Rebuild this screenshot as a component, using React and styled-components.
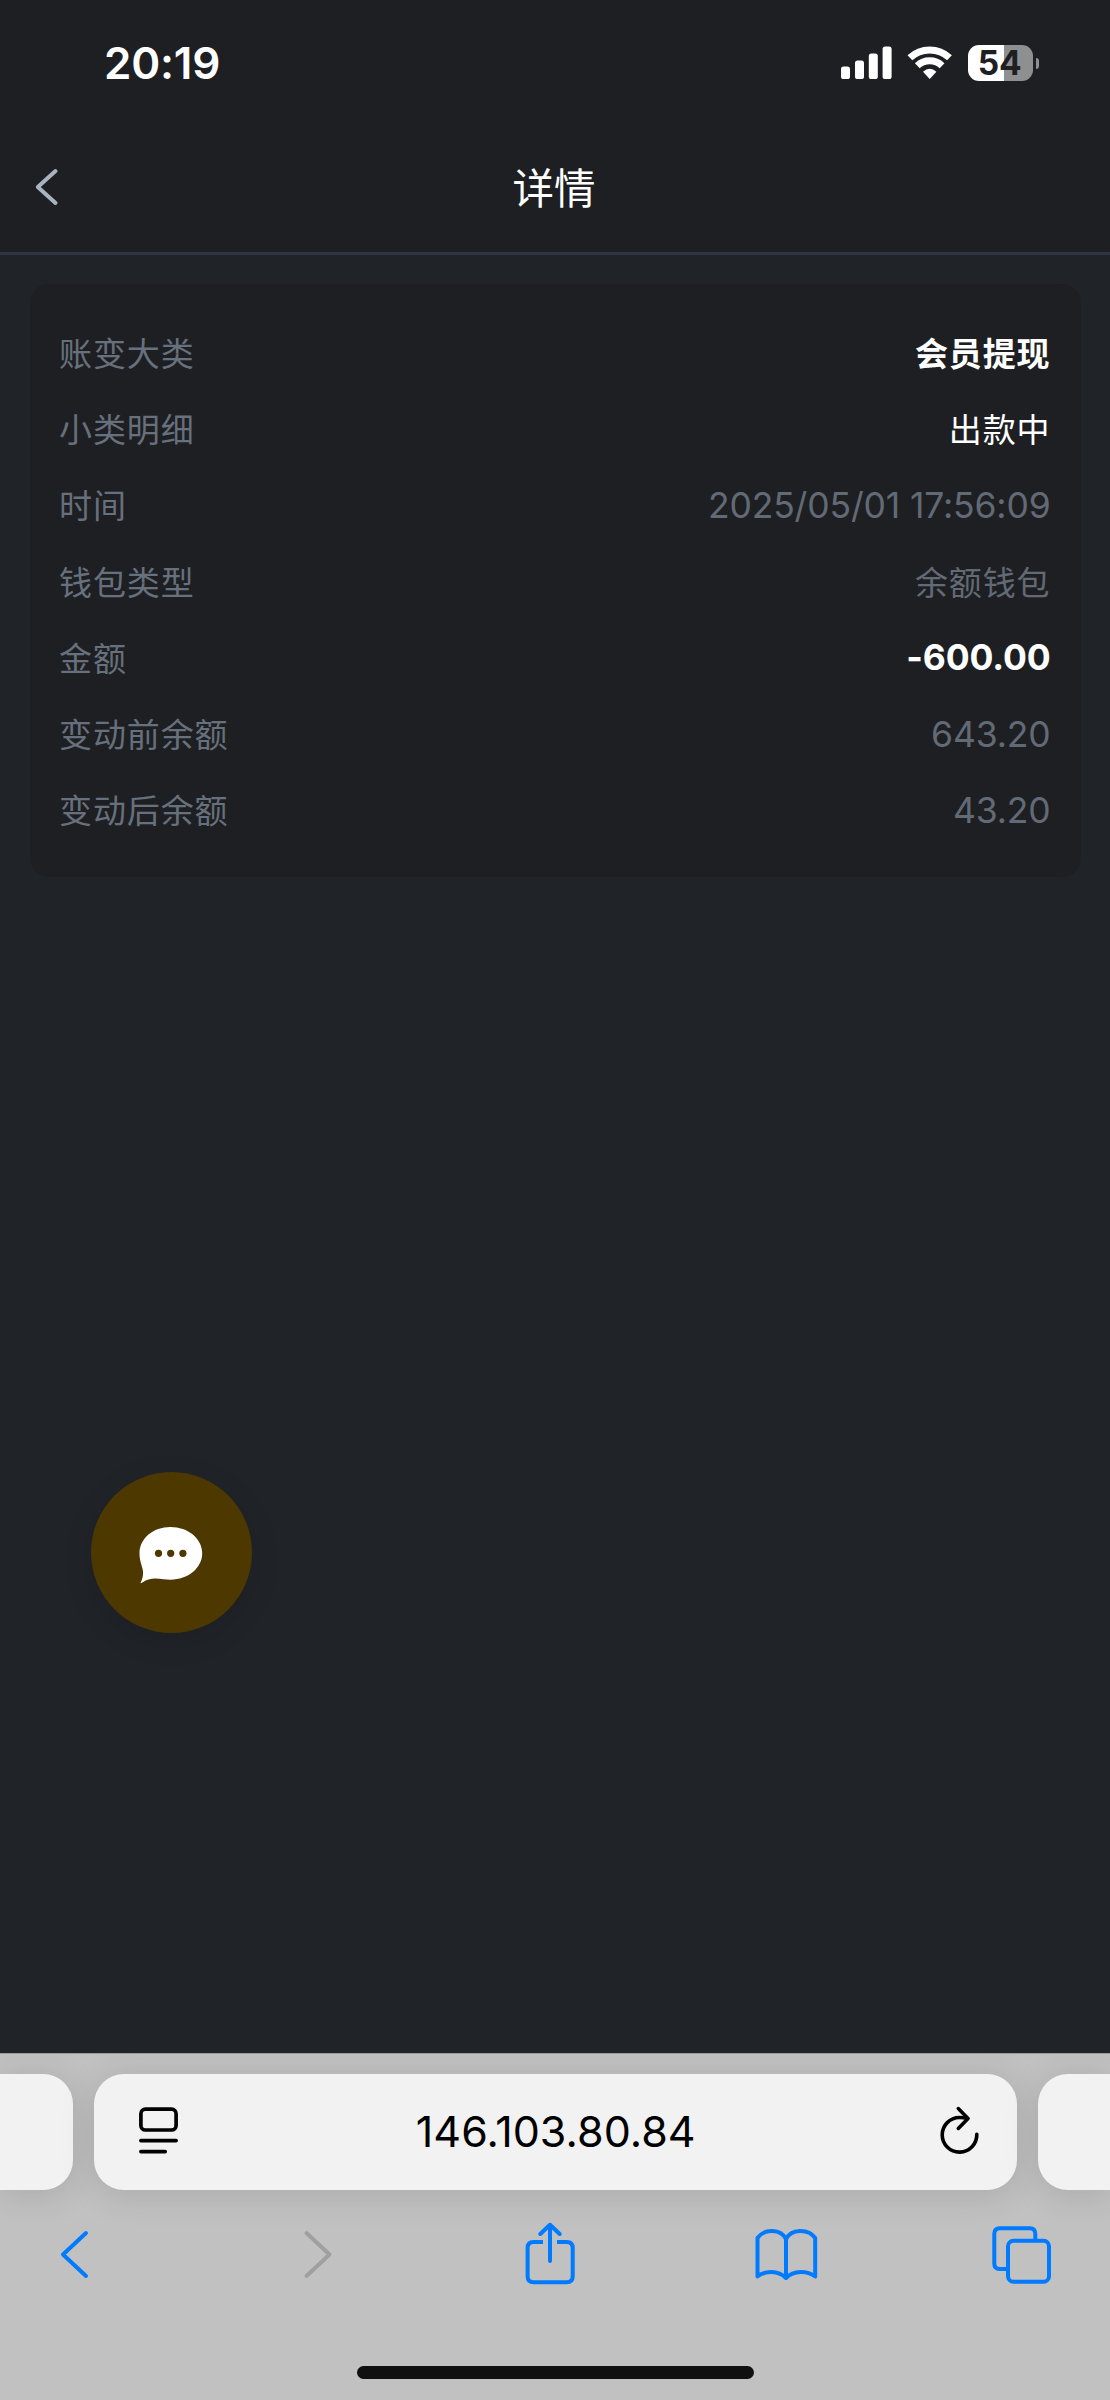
import React from 'react'
import styled, { createGlobalStyle } from 'styled-components';

const rows = [
    { label: '账变大类', value: '会员提现', color: '#ffffff', bold: true },
    { label: '小类明细', value: '出款中', color: '#ffffff' },
    { label: '时间', value: '2025/05/01 17:56:09', num: true },
    { label: '钱包类型', value: '余额钱包' },
    { label: '金额', value: '-600.00', color: '#ffffff', bold: true, num: true },
    { label: '变动前余额', value: '643.20', num: true },
    { label: '变动后余额', value: '43.20', num: true },
]

const StatusIcons = () => (
    <Icons>
        <svg width="50" height="34" viewBox="0 0 50 34" fill="#fff">
            <rect x="0" y="20.5" width="9" height="12.5" rx="2.6" />
            <rect x="14" y="14.5" width="9" height="18.5" rx="2.6" />
            <rect x="27.8" y="7.5" width="9" height="25.5" rx="2.6" />
            <rect x="41.6" y="0.5" width="9" height="32.5" rx="2.6" />
        </svg>
        <svg width="44" height="34" viewBox="0 0 44 34" fill="none" stroke="#fff" strokeWidth="7">
            <path d="M1.9 11.8A29 29 0 0 1 41.5 11.8" />
            <path d="M9.3 19.7A18.2 18.2 0 0 1 34.1 19.7" />
            <path d="M21.7 33L15 25.8Q21.7 19.7 28.4 25.8Z" fill="#fff" stroke="none" />
        </svg>
        <Battery>
            <Level>54</Level>
            <Nub />
        </Battery>
    </Icons>
)

const App = () => {
    return (<>
    <GlobalStyle />
    <Page>
        <StatusBar>
            <Time>20:19</Time>
            <StatusIcons />
        </StatusBar>
        <Header>
            <Back width="24" height="38" viewBox="0 0 24 38">
                <path d="M20.5 3L2.8 19L20.5 35" fill="none" stroke="#a9b3c0" strokeWidth="4" strokeLinecap="round" strokeLinejoin="round" />
            </Back>
            <Title>详情</Title>
        </Header>
        <Content>
            <Card>
                {rows.map((row) => (
                    <Row key={row.label}>
                        <Label>{row.label}</Label>
                        <Value $color={row.color} $bold={row.bold} $num={row.num}>{row.value}</Value>
                    </Row>
                ))}
            </Card>
            <ChatButton>
                <svg width="64" height="58" viewBox="0 0 64 58">
                    <path d="M31.500 0C49 0 63.200 11.500 63.200 26.300S49 52.700 31.500 52.700C27 52.700 22 51.300 15.500 51.400C9.500 51.600 6 53.500 2.400 56.100C1.600 56.500 1.300 56 1.700 55.400C3.500 52 4.300 48.500 4 44.500C3.600 39.500 .5 35 .5 26.300C.5 11.500 14 0 31.500 0Z" fill="#fff" />
                    <circle cx="19.500" cy="26.300" r="3.600" fill="#4d3800" />
                    <circle cx="31.700" cy="26.300" r="3.600" fill="#4d3800" />
                    <circle cx="43.900" cy="26.300" r="3.600" fill="#4d3800" />
                </svg>
            </ChatButton>
        </Content>
        <Browser>
            <Tabs>
                <SideTab $left />
                <AddressBar>
                    <svg width="40" height="48" viewBox="0 0 40 48" fill="none" stroke="#000" strokeWidth="3.7" strokeLinecap="round">
                        <rect x="1.9" y="2.2" width="35.200" height="20.800" rx="4.500" />
                        <path d="M1.900 33.600H37.100M1.900 44.600H26.200" />
                    </svg>
                    <Url>146.103.80.84</Url>
                    <svg width="44" height="52" viewBox="0 0 44 52" fill="none" stroke="#000" strokeWidth="3.6" strokeLinecap="round" strokeLinejoin="round">
                        <path d="M38.800 29.300A17.300 17.300 0 1 1 21.500 12.500C24 12.500 27 12.800 29.500 13.500" />
                        <path d="M20.300 3.600L30 13.400L20.300 23.400" />
                    </svg>
                </AddressBar>
                <SideTab />
            </Tabs>
            <Toolbar>
                <Tool viewBox="0 0 68 72">
                    <path d="M46 15L23 36.500L46 58" />
                </Tool>
                <Tool viewBox="0 0 68 72" $off>
                    <path d="M29.500 15L52.500 36.500L29.500 58" />
                </Tool>
                <Tool viewBox="0 0 68 72">
                    <path d="M29 24H19.600Q13.600 24 13.600 30V58.200Q13.600 64.200 19.600 64.200H52.700Q58.700 64.200 58.700 58.200V30Q58.700 24 52.700 24H43" strokeLinecap="butt" />
                    <path d="M36 43V6.800M26.300 16L36 6.800L45.700 16" />
                </Tool>
                <Tool viewBox="0 0 68 72">
                    <path d="M35 21C30 11 14 10 6.500 20V58.500C14 52.500 27 52 35 60C43 52 56 52.500 64.200 58.500V20C57 10 40 11 35 21V60" />
                </Tool>
                <Tool viewBox="0 0 68 72">
                    <rect x="20" y="22.700" width="41" height="41" rx="5.500" />
                    <path d="M47.300 22V15.800Q47.300 10.300 41.800 10.300H11.800Q6.300 10.300 6.300 15.800V45.500Q6.300 51 11.800 51H20" strokeLinecap="butt" />
                </Tool>
            </Toolbar>
            <HomeIndicator />
        </Browser>
    </Page>
    </>)
}
export default App



const GlobalStyle = createGlobalStyle`
    * {
        box-sizing: border-box;
    }
    body {
        margin: 0;
        background: #202328;
        font-family: Inter, "Noto Sans CJK SC", sans-serif;
    }
    svg {
        display: block;
        flex: none;
        overflow: visible;
    }
`

const Page = styled.div`
    display: flex;
    flex-direction: column;
    width: 1110px;
    height: 2400px;
    overflow: hidden;
    background: #202328;
`

const StatusBar = styled.div`
    display: flex;
    align-items: center;
    justify-content: space-between;
    height: 122px;
    padding: 4px 71px 0 104px;
    background: #1e1f22;
`

const Time = styled.div`
    font-size: 44px;
    font-weight: 600;
    line-height: 50px;
    letter-spacing: -0.200px;
    color: #fff;
`

const Icons = styled.div`
    display: flex;
    align-items: center;
    gap: 17px;
`

const Battery = styled.div`
    display: flex;
    align-items: center;
    gap: 3px;
    margin-left: -1px;
`

const Level = styled.div`
    width: 65px;
    height: 36px;
    padding-right: 2px;
    border-radius: 11px;
    background: linear-gradient(to right, #fff 55%, #8e8f91 55%);
    font-size: 33.500px;
    font-weight: 650;
    line-height: 36px;
    text-align: center;
    letter-spacing: -0.300px;
    color: #1e1f22;
`

const Nub = styled.div`
    width: 3px;
    height: 11px;
    border-radius: 0 4px 4px 0;
    background: #8e8f91;
`

const Header = styled.div`
    display: grid;
    grid-template-columns: 75px 1fr 75px;
    align-items: center;
    height: 133px;
    border-bottom: 3px solid #2d3642;
    background: #1e1f22;
`

const Back = styled.svg`
    margin-left: 35px;
`

const Title = styled.div`
    padding: 4px 2px 0 0;
    font-size: 41.500px;
    line-height: 60px;
    text-align: center;
    color: #fff;
`

const Content = styled.div`
    position: relative;
    flex: 1;
    padding: 29px 29px 0 29.500px;
`

const Card = styled.div`
    height: 593px;
    padding: 31px 30.500px 0 29.500px;
    border-radius: 19px;
    background: #1e1f22;
`

const Row = styled.div`
    display: flex;
    align-items: center;
    justify-content: space-between;
    height: 76.200px;
`

const Label = styled.span`
    padding-bottom: 2px;
    font-size: 33px;
    letter-spacing: 0.900px;
    color: #67707d;
`

const Value = styled.span`
    padding-bottom: ${props => props.$num ? '0' : '2px'};
    font-size: ${props => props.$num ? '35.500px' : '33px'};
    font-weight: ${props => props.$bold ? 700 : 400};
    letter-spacing: ${props => props.$num ? '-0.150px' : '0.900px'};
    color: ${props => props.$color || '#626a76'};
`

const ChatButton = styled.div`
    position: absolute;
    left: 90.500px;
    top: 1217px;
    display: flex;
    align-items: center;
    justify-content: center;
    width: 161px;
    height: 161px;
    padding: 6px 1px 0 0;
    border-radius: 50%;
    background: #4d3800;
    box-shadow: 0 8px 30px rgba(0, 0, 0, 0.12);
`

const Browser = styled.div`
    height: 347px;
    border-top: 1px solid #999b9e;
    background: #c1c1c1;
    overflow: hidden;
`

const Tabs = styled.div`
    display: flex;
    justify-content: space-between;
    padding-top: 20px;
`

const SideTab = styled.div`
    width: 72.500px;
    height: 116px;
    border-radius: ${props => props.$left ? '0 30px 30px 0' : '30px 0 0 30px'};
    background: #f2f2f2;
    box-shadow: 0 4px 36px rgba(0, 0, 0, 0.12);
`

const AddressBar = styled.div`
    display: flex;
    align-items: center;
    justify-content: space-between;
    width: 923px;
    height: 116px;
    padding: 0 34px 2px 45.500px;
    border-radius: 30px;
    background: #f2f2f2;
    box-shadow: 0 4px 36px rgba(0, 0, 0, 0.12);
`

const Url = styled.div`
    padding-right: 6px;
    font-size: 43px;
    letter-spacing: 0.050px;
    color: #000;
`

const Toolbar = styled.div`
    display: flex;
    justify-content: space-between;
    padding: 28px 54px 0 40px;
`

const Tool = styled.svg`
    width: 68px;
    height: 72px;
    fill: none;
    stroke: ${props => props.$off ? '#a0a0a0' : '#007aff'};
    stroke-width: 4;
    stroke-linecap: round;
    stroke-linejoin: round;
`

const HomeIndicator = styled.div`
    width: 397px;
    height: 13px;
    margin: 76px auto 0;
    border-radius: 7px;
    background: #101010;
`
